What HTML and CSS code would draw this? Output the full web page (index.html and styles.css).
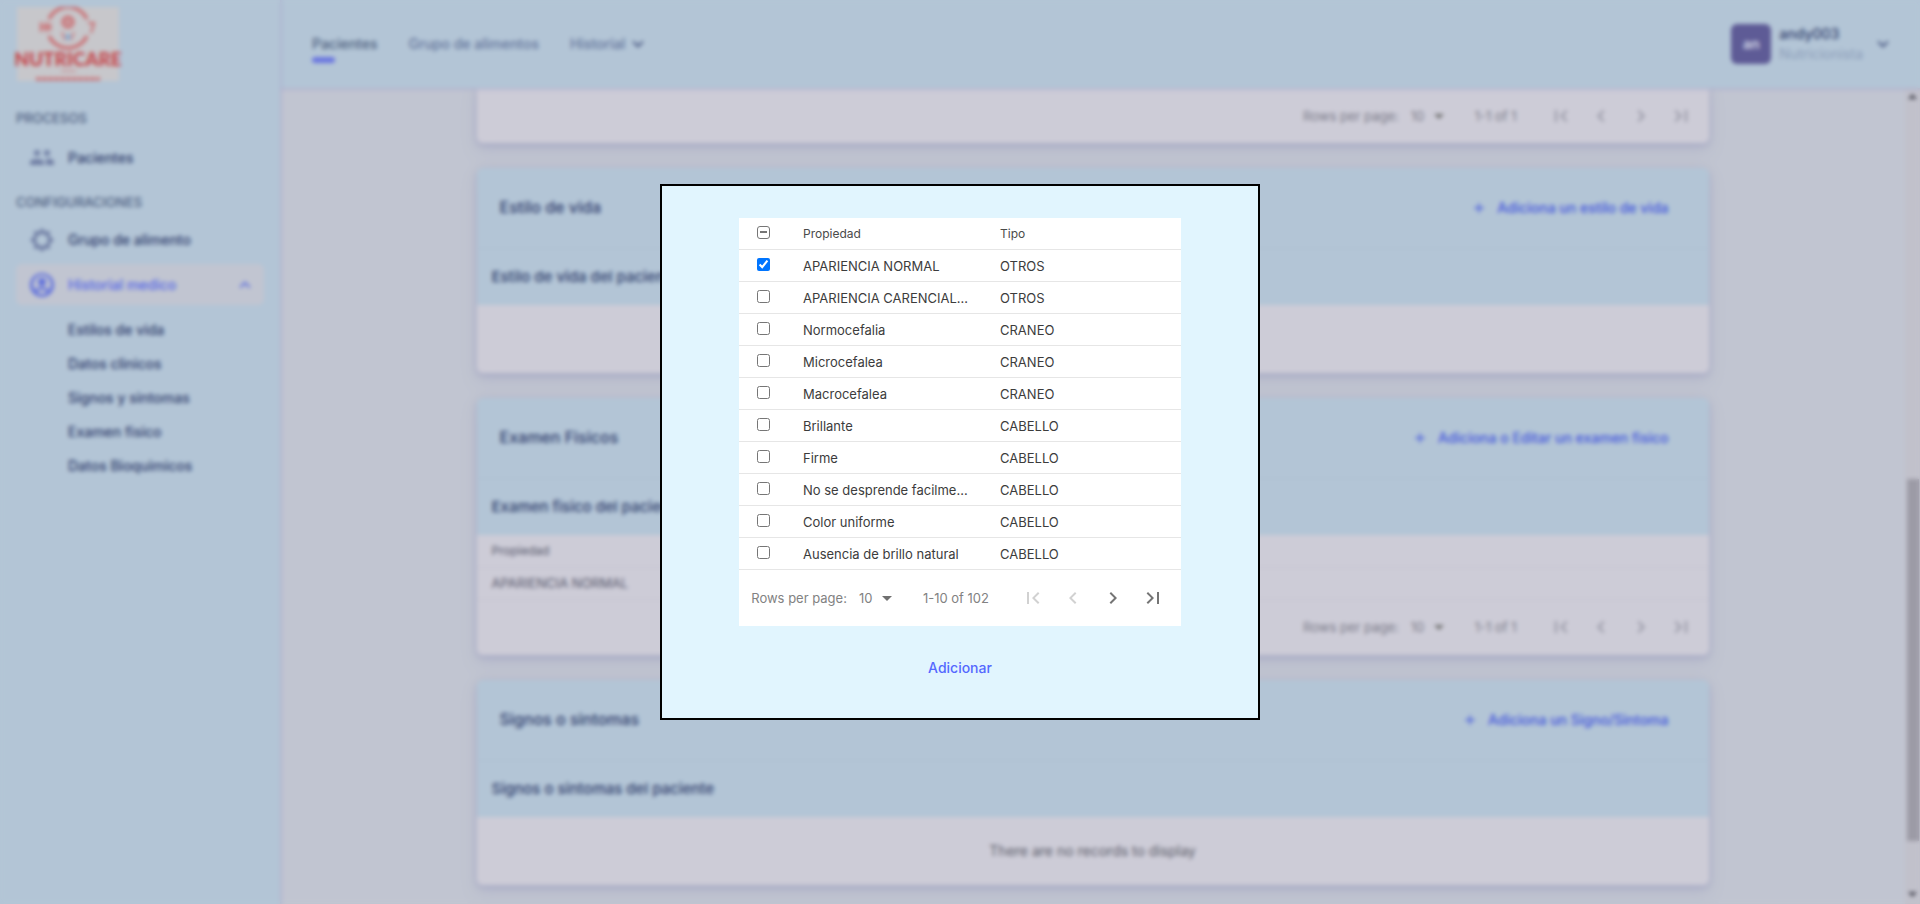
FILE: index.html
```html
<!DOCTYPE html>
<html lang="es">
<head>
<meta charset="utf-8">
<meta name="viewport" content="width=device-width, initial-scale=1">
<title>Nutricare - Pacientes</title>
<link rel="stylesheet" href="styles.css">
</head>
<body>
<svg class="sprite" aria-hidden="true">
  <symbol id="first" viewBox="0 0 24 24"><path d="M18.41 16.59L13.82 12l4.59-4.59L17 6l-6 6 6 6zM6 6h2v12H6z"/></symbol>
  <symbol id="prev" viewBox="0 0 24 24"><path d="M15.41 7.41L14 6l-6 6 6 6 1.41-1.41L10.83 12z"/></symbol>
  <symbol id="next" viewBox="0 0 24 24"><path d="M10 6L8.59 7.41 13.17 12l-4.58 4.59L10 18l6-6z"/></symbol>
  <symbol id="last" viewBox="0 0 24 24"><path d="M5.59 7.41L10.18 12l-4.59 4.59L7 18l6-6-6-6zM16 6h2v12h-2z"/></symbol>
  <symbol id="drop" viewBox="0 0 24 24"><path d="M7 10l5 5 5-5z"/></symbol>
  <symbol id="down" viewBox="0 0 24 24"><path d="M7.41 8.59L12 13.17l4.59-4.58L18 10l-6 6-6-6z"/></symbol>
  <symbol id="up" viewBox="0 0 24 24"><path d="M7.41 15.41L12 10.83l4.59 4.58L18 14l-6-6-6 6z"/></symbol>
  <symbol id="plus" viewBox="0 0 24 24"><path d="M19 13h-6v6h-2v-6H5v-2h6V5h2v6h6z"/></symbol>
</svg>

<div class="app">
  <aside class="sidebar">
    <a class="logo" href="#" aria-label="Nutricare">
      <svg viewBox="0 0 106 74" width="106" height="74">
        <rect x="2" width="102" height="74" fill="#c7c7cb"/>
        <g fill="none" stroke="#cb686c" stroke-width="3">
          <path d="M34 12a21 21 0 0 1 38 0"/>
          <path d="M34 29a21 21 0 0 0 38 0"/>
          <circle cx="53" cy="15" r="5"/>
        </g>
        <circle cx="53" cy="15" r="2" fill="#cb686c"/>
        <path d="M47 25l3 8M59 25l-3 8" stroke="#cb8084" stroke-width="2"/>
        <circle cx="53" cy="30" r="3" fill="#8aaed0"/>
        <path d="M26 15v10M31 15v10M35 16v8M26 20h9M73 16h6l-3 10" fill="none" stroke="#cb686c" stroke-width="2"/>
        <path d="M46 64h15" stroke="#cb9a9e" stroke-width="2"/>
        <path d="M21 72h64" stroke="#cb686c" stroke-width="3" stroke-dasharray="5 1"/>
        <text class="logo-text" x="53" y="59" text-anchor="middle">NUTRICARE</text>
      </svg>
    </a>
    <nav class="menu" aria-label="Menu">
      <h2 class="menu-title">PROCESOS</h2>
      <a class="menu-item" href="#">
        <svg viewBox="0 0 24 24"><circle cx="7" cy="7" r="3"/><circle cx="17" cy="7" r="3"/><path d="M0 19v-3c0-4 14-4 14 0v3zM16 19v-6c5-1 8 1 8 3v3z"/></svg>
        Pacientes</a>
      <h2 class="menu-title">CONFIGURACIONES</h2>
      <a class="menu-item" href="#">
        <svg viewBox="0 0 24 24"><path fill-rule="evenodd" d="M12 0l3 3.500 5-.5-.5 5L24 12l-4.500 4 .5 5-5-.5-3 3.500-3-3.500-5 .5.5-5L0 12l4.500-4L4 3l5 .5zM12 6a6 6 0 1 0 0 12 6 6 0 0 0 0-12z"/></svg>
        Grupo de alimento</a>
      <a class="menu-item active" href="#">
        <svg viewBox="0 0 24 24"><path fill-rule="evenodd" d="M12 0a12 12 0 1 0 0 24 12 12 0 0 0 0-24zM7 19c2-3 8-3 10 0-3 3-7 3-10 0zM5 17a9 9 0 1 1 14 0c-3-4-11-4-14 0zM12 5a4 4 0 1 0 0 8 4 4 0 0 0 0-8z"/></svg>
        <span class="grow">Historial medico</span>
        <svg class="caret"><use href="#up"/></svg></a>
      <div class="submenu">
        <a href="#">Estilos de vida</a>
        <a href="#">Datos clinicos</a>
        <a href="#">Signos y sintomas</a>
        <a href="#">Examen fisico</a>
        <a href="#">Datos Bioquimicos</a>
      </div>
    </nav>
  </aside>

  <header class="topbar">
    <nav class="tabs" aria-label="Principal">
      <a class="current" href="#">Pacientes</a>
      <a href="#">Grupo de alimentos</a>
      <a href="#">Historial <svg class="icon"><use href="#down"/></svg></a>
    </nav>
    <button class="user" type="button">
      <span class="avatar">an</span>
      <span class="who"><b>andy003</b><span>Nutricionista</span></span>
      <svg class="icon"><use href="#down"/></svg>
    </button>
  </header>

  <main class="content">
    <div class="cards">
      <section class="card first">
        <div class="pager">
          <label for="n1">Rows per page:</label>
          <span class="pick"><select id="n1"><option>10</option></select><svg><use href="#drop"/></svg></span>
          <span class="range">1-1 of 1</span>
          <button type="button" disabled aria-label="First page"><svg><use href="#first"/></svg></button>
          <button type="button" disabled aria-label="Previous page"><svg><use href="#prev"/></svg></button>
          <button type="button" disabled aria-label="Next page"><svg><use href="#next"/></svg></button>
          <button type="button" disabled aria-label="Last page"><svg><use href="#last"/></svg></button>
        </div>
      </section>

      <section class="card">
        <div class="card-head"><h3>Estilo de vida</h3>
          <button class="add" type="button"><svg><use href="#plus"/></svg>Adiciona un estilo de vida</button></div>
        <h4 class="card-sub">Estilo de vida del paciente</h4>
        <p class="empty">There are no records to display</p>
      </section>

      <section class="card">
        <div class="card-head"><h3>Examen Fisicos</h3>
          <button class="add" type="button"><svg><use href="#plus"/></svg>Adiciona o Editar un examen fisico</button></div>
        <h4 class="card-sub">Examen fisico del paciente</h4>
        <table class="grid">
          <thead><tr><th>Propiedad</th></tr></thead>
          <tbody><tr><td>APARIENCIA NORMAL</td></tr></tbody>
        </table>
        <div class="pager">
          <label for="n2">Rows per page:</label>
          <span class="pick"><select id="n2"><option>10</option></select><svg><use href="#drop"/></svg></span>
          <span class="range">1-1 of 1</span>
          <button type="button" disabled aria-label="First page"><svg><use href="#first"/></svg></button>
          <button type="button" disabled aria-label="Previous page"><svg><use href="#prev"/></svg></button>
          <button type="button" disabled aria-label="Next page"><svg><use href="#next"/></svg></button>
          <button type="button" disabled aria-label="Last page"><svg><use href="#last"/></svg></button>
        </div>
      </section>

      <section class="card">
        <div class="card-head"><h3>Signos o sintomas</h3>
          <button class="add" type="button"><svg><use href="#plus"/></svg>Adiciona un Signo/Sintoma</button></div>
        <h4 class="card-sub">Signos o sintomas del paciente</h4>
        <p class="empty">There are no records to display</p>
      </section>
    </div>
    <div class="scroll" aria-hidden="true">
      <svg viewBox="0 0 15 17"><path d="M3 11l4.500-5 4.500 5z"/></svg>
      <div class="track"><div class="thumb"></div></div>
      <svg viewBox="0 0 15 17"><path d="M3 5l4.500 5L12 5z"/></svg>
    </div>
  </main>
</div>

<div class="backdrop">
  <div class="modal" role="dialog" aria-modal="true" aria-label="Examen fisico">
    <div class="sheet">
      <table class="grid pickable">
        <thead><tr><th class="tick"><input type="checkbox" id="all" aria-label="Seleccionar todo"></th><th>Propiedad</th><th>Tipo</th></tr></thead>
        <tbody>
          <tr><td class="tick"><input type="checkbox" id="r1" checked></td><td><label for="r1">APARIENCIA NORMAL</label></td><td>OTROS</td></tr>
          <tr><td class="tick"><input type="checkbox" id="r2"></td><td><label for="r2">APARIENCIA CARENCIALES</label></td><td>OTROS</td></tr>
          <tr><td class="tick"><input type="checkbox" id="r3"></td><td><label for="r3">Normocefalia</label></td><td>CRANEO</td></tr>
          <tr><td class="tick"><input type="checkbox" id="r4"></td><td><label for="r4">Microcefalea</label></td><td>CRANEO</td></tr>
          <tr><td class="tick"><input type="checkbox" id="r5"></td><td><label for="r5">Macrocefalea</label></td><td>CRANEO</td></tr>
          <tr><td class="tick"><input type="checkbox" id="r6"></td><td><label for="r6">Brillante</label></td><td>CABELLO</td></tr>
          <tr><td class="tick"><input type="checkbox" id="r7"></td><td><label for="r7">Firme</label></td><td>CABELLO</td></tr>
          <tr><td class="tick"><input type="checkbox" id="r8"></td><td><label for="r8">No se desprende facilmente</label></td><td>CABELLO</td></tr>
          <tr><td class="tick"><input type="checkbox" id="r9"></td><td><label for="r9">Color uniforme</label></td><td>CABELLO</td></tr>
          <tr><td class="tick"><input type="checkbox" id="r10"></td><td><label for="r10">Ausencia de brillo natural</label></td><td>CABELLO</td></tr>
        </tbody>
      </table>
      <div class="pager">
        <label for="n3">Rows per page:</label>
        <span class="pick"><select id="n3"><option>10</option></select><svg><use href="#drop"/></svg></span>
        <span class="range">1-10 of 102</span>
        <button type="button" disabled aria-label="First page"><svg><use href="#first"/></svg></button>
        <button type="button" disabled aria-label="Previous page"><svg><use href="#prev"/></svg></button>
        <button type="button" aria-label="Next page"><svg><use href="#next"/></svg></button>
        <button type="button" aria-label="Last page"><svg><use href="#last"/></svg></button>
      </div>
    </div>
    <button class="submit" type="button">Adicionar</button>
  </div>
</div>
<script>
  document.getElementById('all').indeterminate = true;
</script>
</body>
</html>
```
FILE: styles.css
```css
:root {
  --sky: #b3c5d6;
  --paper: #cdccd7;
  --page: #c1c5d1;
  --ink: #2f3d6c;
  --blue: #5569ff;
}
* { box-sizing: border-box; }
body {
  margin: 0;
  background: var(--page);
  color: var(--ink);
  font: 14px/20px Inter, "Liberation Sans", sans-serif;
}
h2, h3, h4, p { margin: 0; }
a { color: inherit; text-decoration: none; }
button { border: 0; padding: 0; background: none; font: inherit; color: inherit; cursor: pointer; }
svg { fill: currentColor; flex: none; }
.sprite { display: none; }
.icon { width: 22px; height: 22px; }

.app {
  display: grid;
  grid-template: 88px 1fr / 280px minmax(0, 1fr);
  height: 100vh;
  overflow: hidden;
}

/* Sidebar */
.sidebar {
  grid-row: 1 / 3;
  background: var(--sky);
  box-shadow: 1px 0 3px #a9a9cc;
  z-index: 2;
}
.logo { display: block; height: 81px; padding: 7px 15px 0; }
.logo-text { font: 900 19px Lato, sans-serif; fill: #c5474c; }
.menu { padding: 24px 16px; font-weight: 500; }
.menu-title { padding: 3px 0 9px; font-size: 13px; line-height: 20px; font-weight: 500; color: #4d5e80; }
.menu-item + .menu-title { padding-top: 10px; padding-bottom: 7px; }
.menu-item {
  display: flex;
  align-items: center;
  gap: 14px;
  height: 41px;
  margin-bottom: 4px;
  padding: 0 14px;
  border-radius: 6px;
}
.menu-item svg { width: 24px; height: 24px; color: #707ea4; }
.menu-item.active { background: var(--page); color: #5567e6; }
.menu-item.active svg { color: #6272dc; }
.menu-item .caret { width: 22px; height: 22px; margin-right: -6px; }
.grow { flex: 1; }
.submenu { display: flex; flex-direction: column; padding: 4px 0 0 52px; }
.submenu a { padding: 7px 0; }

/* Top bar */
.topbar {
  display: flex;
  align-items: center;
  justify-content: space-between;
  padding: 0 26px 0 32px;
  background: var(--sky);
  box-shadow: 0 1px 3px #a9a9cc;
  z-index: 1;
}
.tabs { display: flex; gap: 31px; font-weight: 500; color: #64759c; }
.tabs a { display: flex; align-items: center; gap: 2px; position: relative; }
.tabs .current { color: #4c5e7d; }
.tabs .current::after {
  content: "";
  position: absolute;
  top: 24px;
  left: 0;
  width: 23px;
  height: 6px;
  border-radius: 6px;
  background: #6a76e0;
}
.tabs .icon, .user .icon { color: #46557f; }
.user { display: flex; align-items: center; text-align: left; }
.avatar {
  display: grid;
  place-items: center;
  width: 40px;
  height: 40px;
  margin-right: 8px;
  border-radius: 6px;
  background: #5e5b96;
  color: #c8cce0;
  font-weight: 700;
}
.who { display: grid; margin-right: 9px; }
.who b { font-weight: 500; }
.who span { color: #8b9db9; }

/* Content */
.content { display: flex; min-height: 0; overflow: hidden; }
.cards {
  flex: 1;
  display: flex;
  flex-direction: column;
  gap: 25px;
  max-width: 1280px;
  margin: 0 auto;
  padding: 0 24px;
}
.card {
  border-radius: 6px;
  background: var(--paper);
  box-shadow: 0 8px 16px rgba(159, 162, 191, .3), 0 2px 6px rgba(150, 152, 190, .6);
}
.card.first { border-radius: 0 0 6px 6px; }
.card-head {
  display: flex;
  justify-content: space-between;
  height: 81px;
  padding: 0 40px 0 23px;
  border-bottom: 1px solid #afc0d2;
  border-radius: 6px 6px 0 0;
  background: var(--sky);
}
.card-head h3 { padding-top: 29px; font-size: 16px; font-weight: 500; }
.card-sub { height: 56px; padding: 18px 15px; font-size: 15px; font-weight: 500; background: var(--sky); }
.add { display: flex; align-items: center; gap: 10px; font-weight: 500; color: #4356dc; }
.add svg { width: 16px; height: 16px; }
.empty { padding: 24px; text-align: center; color: #5a5b68; }

/* Tables */
.grid { width: 100%; border-collapse: collapse; table-layout: fixed; font-size: 13px; color: #3c3c3c; }
.grid tr { height: 32px; }
.grid th, .grid td {
  padding: 0 14px 0 16px;
  border-bottom: 1px solid #e6e6e6;
  text-align: left;
  font-weight: 400;
  line-height: 20px;
  overflow: hidden;
  white-space: nowrap;
  text-overflow: ellipsis;
}
.grid th { font-size: 12px; color: #4a4a4a; }
.card .grid, .card .grid th { color: #55566a; }
.card .grid th, .card .grid td { border-color: #c4c3cf; padding-left: 15px; }

.pager {
  display: flex;
  align-items: center;
  justify-content: flex-end;
  height: 56px;
  padding: 0 8px;
  font-size: 13px;
  color: #828282;
}
.pager label { margin-right: 4px; }
.pick { display: flex; align-items: center; }
.pick select {
  appearance: none;
  width: 48px;
  height: 24px;
  padding: 0 0 0 8px;
  border: 0;
  background: none;
  font: inherit;
  color: inherit;
}
.pick svg { width: 24px; height: 24px; margin-left: -24px; color: #707070; pointer-events: none; }
.range { margin: 0 24px; }
.pager button { display: grid; place-items: center; width: 40px; height: 40px; color: #757575; }
.pager button svg { width: 24px; height: 24px; }
.pager button:disabled { color: rgba(0, 0, 0, .18); }
.card .pager { height: 55px; color: #7a7a88; }
.card .pager button:disabled { color: #9696a4; }

/* Page scrollbar */
.scroll { display: flex; flex-direction: column; width: 15px; background: #c1c1cb; color: #4c4c58; }
.scroll > svg { width: 15px; height: 17px; }
.track { flex: 1; display: flex; flex-direction: column; padding: 0 1px 0 2px; }
.track::before { content: ""; flex: 374; }
.track::after { content: ""; flex: 46; }
.thumb { flex: 362; background: #9c9ba6; }

/* Dialog */
.backdrop {
  position: fixed;
  inset: 0;
  display: grid;
  place-items: center;
  backdrop-filter: blur(2px);
  z-index: 10;
}
.modal {
  display: flex;
  flex-direction: column;
  align-items: center;
  gap: 24px;
  width: 600px;
  max-width: 100%;
  padding: 32px 77px;
  border: 2px solid #000;
  background: #e1f5fe;
}
.sheet { width: 100%; background: #fff; }
.pickable .tick { width: 48px; padding: 0; text-align: center; }
.pickable input { display: block; width: 13px; height: 13px; margin: 0 auto 3px; }
.pickable input:indeterminate {
  appearance: none;
  border: 1px solid #767676;
  border-radius: 3px;
  background: linear-gradient(#767676, #767676) center / 7px 2px no-repeat #fff;
}
.submit { height: 36px; padding: 0 16px; font-weight: 500; color: var(--blue); }
```
